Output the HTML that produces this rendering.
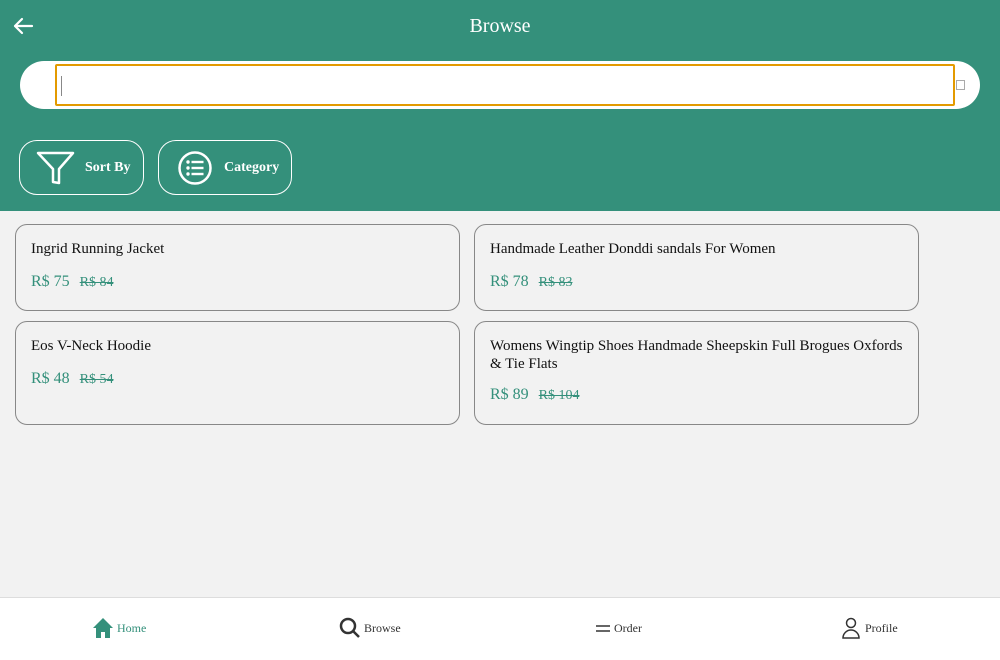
<!DOCTYPE html>
<html><head><meta charset="utf-8"><style>
*{box-sizing:border-box;margin:0;padding:0}
body{width:1000px;height:660px;background:#f2f2f2;font-family:"Liberation Serif",serif;position:relative;overflow:hidden}
.hdr{position:absolute;left:0;top:0;width:1000px;height:211px;background:#34907b}
.title{position:absolute;left:0;width:1000px;top:15px;text-align:center;color:#fff;font-size:20px}
.pill{position:absolute;left:20px;top:61px;width:960px;height:48px;background:#fff;border-radius:24px}
.inp{position:absolute;left:55px;top:64px;width:900px;height:42px;border:2px solid #e39a00;border-radius:2px;background:#fff}
.caret{position:absolute;left:4px;top:10px;width:1px;height:20px;background:#888}
.sq{position:absolute;left:956px;top:80px;width:9px;height:10px;border:1px solid #aaa}
.btn{position:absolute;top:140px;height:55px;border:1px solid #fff;border-radius:18px;color:#fff;font-size:14px;font-weight:bold}
.btn span{position:absolute;top:19px}
.card{position:absolute;border:1px solid #888;border-radius:12px;background:#f2f2f2}
.card .n{position:absolute;left:15px;top:15px;font-size:15px;color:#111;line-height:18px;width:420px}
.pr{position:absolute;left:15px;font-size:16px;color:#34907b}
.pr s{font-size:14px;margin-left:6px}
.bar{position:absolute;left:0;top:597px;width:1000px;height:63px;background:#fff;border-top:1px solid #ddd}
.it{position:absolute;top:19px;font-size:12px;color:#333;display:flex;align-items:center;gap:3px}
</style></head><body>
<div class="hdr">
<svg style="position:absolute;left:12px;top:17px" width="22" height="20" viewBox="0 0 22 20"><path d="M20 9H3M10 2L3 9l7 7" stroke="#fff" stroke-width="2.2" fill="none" stroke-linecap="round" stroke-linejoin="round"/></svg>
<div class="title">Browse</div>
<div class="pill"></div>
<div class="inp"><div class="caret"></div></div>
<div class="sq"></div>
<div class="btn" style="left:19px;width:125px">
<svg style="position:absolute;left:16px;top:9px" width="40" height="37" viewBox="0 0 40 37"><path d="M2 3h35L23 19v14l-6-1V19z" fill="none" stroke="#fff" stroke-width="2.5" stroke-linejoin="round"/></svg>
<span style="left:65px">Sort By</span></div>
<div class="btn" style="left:158px;width:134px">
<svg style="position:absolute;left:18px;top:9px" width="36" height="36" viewBox="0 0 36 36"><circle cx="18" cy="18" r="15.5" fill="none" stroke="#fff" stroke-width="2.5"/><g fill="#fff"><circle cx="11" cy="12" r="1.7"/><circle cx="11" cy="18" r="1.7"/><circle cx="11" cy="24" r="1.7"/><rect x="14.5" y="10.8" width="12" height="2.4"/><rect x="14.5" y="16.8" width="12" height="2.4"/><rect x="14.5" y="22.8" width="12" height="2.4"/></g></svg>
<span style="left:65px">Category</span></div>
</div>
<div class="card" style="left:15px;top:224px;width:445px;height:87px"><div class="n">Ingrid Running Jacket</div><div class="pr" style="top:48px">R$ 75 <s>R$ 84</s></div></div>
<div class="card" style="left:474px;top:224px;width:445px;height:87px"><div class="n">Handmade Leather Donddi sandals For Women</div><div class="pr" style="top:48px">R$ 78 <s>R$ 83</s></div></div>
<div class="card" style="left:15px;top:321px;width:445px;height:104px"><div class="n">Eos V-Neck Hoodie</div><div class="pr" style="top:48px">R$ 48 <s>R$ 54</s></div></div>
<div class="card" style="left:474px;top:321px;width:445px;height:104px"><div class="n">Womens Wingtip Shoes Handmade Sheepskin Full Brogues Oxfords &amp; Tie Flats</div><div class="pr" style="top:64px">R$ 89 <s>R$ 104</s></div></div>
<div class="bar">
<div class="it" style="left:92px;color:#34907b"><svg width="22" height="22" viewBox="0 0 22 22"><path d="M11 1L1 11h3v10h5v-6h4v6h5V11h3z" fill="#34907b"/></svg>Home</div>
<div class="it" style="left:339px"><svg width="22" height="22" viewBox="0 0 22 22"><circle cx="9" cy="9" r="7" fill="none" stroke="#333" stroke-width="2.5"/><path d="M14 14l6 6" stroke="#333" stroke-width="2.5"/></svg>Browse</div>
<div class="it" style="left:596px"><svg width="15" height="22" viewBox="0 0 15 22"><path d="M0 9h14M0 14h14" stroke="#333" stroke-width="1.5"/></svg>Order</div>
<div class="it" style="left:842px"><svg width="20" height="22" viewBox="0 0 20 22"><circle cx="9" cy="6" r="4.5" fill="none" stroke="#333" stroke-width="1.5"/><path d="M1 21a8 8 0 0 1 16 0z" fill="none" stroke="#333" stroke-width="1.5"/></svg>Profile</div>
</div>
</body></html>
